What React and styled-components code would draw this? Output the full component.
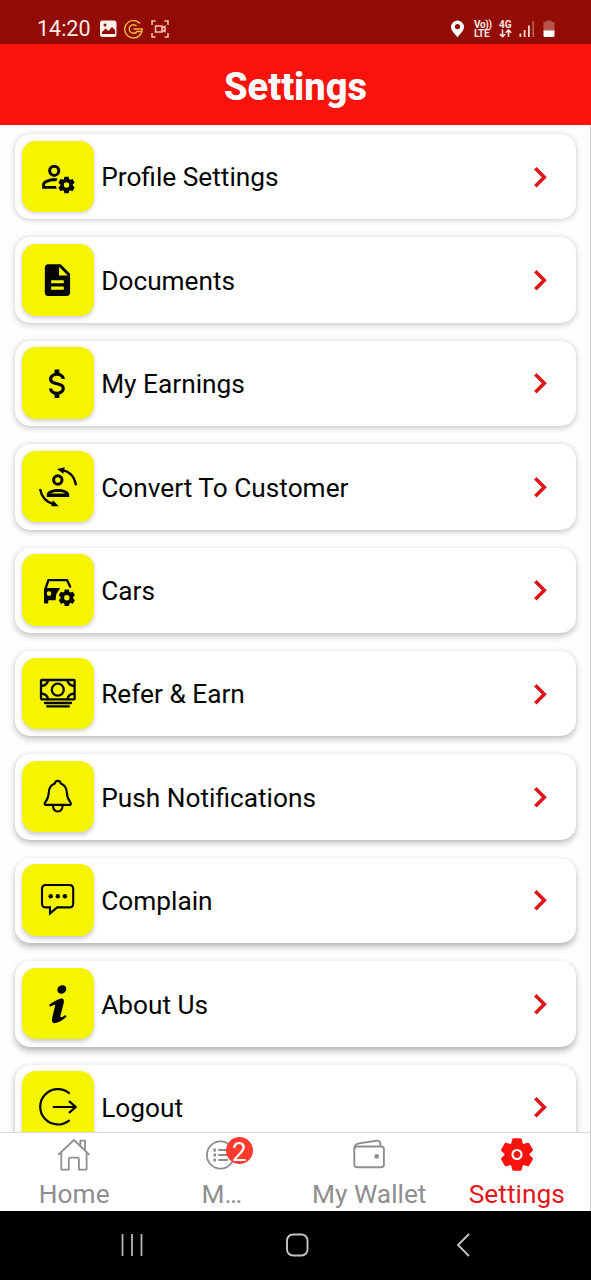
import React from "react";
import styled, { createGlobalStyle } from "styled-components";

const colors = {
  statusBar: "#920b05",
  red: "#f9130c",
  chevron: "#e0151a",
  yellow: "#f6f500",
  grey: "#8e8e8f",
  badge: "#ff3b30",
  ink: "#050505",
};

const GlobalStyle = createGlobalStyle`
  * {
    box-sizing: border-box;
  }
  body {
    margin: 0;
    background: #fff;
    font-family: Roboto, "Liberation Sans", sans-serif;
  }
`;

const Screen = styled.div`
  display: flex;
  flex-direction: column;
  width: 591px;
  height: 1280px;
  overflow: hidden;
  background: #fefefe;
`;

const StatusBar = styled.div`
  display: flex;
  flex: none;
  justify-content: space-between;
  height: 44px;
  padding: 15px 36px 0 37px;
  background: ${colors.statusBar};
  color: #ffe9e2;
`;

const StatusGroup = styled.div`
  display: flex;
  align-items: center;
  height: 28px;
  gap: ${props => props.$gap}px;
`;

const Clock = styled.span`
  width: 55px;
  font-size: 21.5px;
  line-height: 28px;
`;

const Network = styled.span`
  display: flex;
  flex-direction: column;
  width: ${props => props.$width}px;
  font-size: 10px;
  font-weight: 700;
  line-height: 9.5px;
  letter-spacing: ${props => props.$tracking || 0}px;
  white-space: nowrap;
`;

const Header = styled.header`
  display: flex;
  flex: none;
  align-items: center;
  justify-content: center;
  height: 81px;
  padding-top: 5px;
  background: ${colors.red};
`;

const Title = styled.h1`
  margin: 0;
  color: #fff;
  font-size: 38px;
  font-weight: 800;
  line-height: 44px;
`;

const List = styled.main`
  display: flex;
  flex: 1;
  flex-direction: column;
  gap: 18px;
  min-height: 0;
  padding: 9px 14px 0 15px;
  overflow: hidden;
  border-right: 1px solid #c9c9c9;
`;

const Card = styled.div`
  display: flex;
  flex: none;
  align-items: center;
  height: 85.4px;
  padding: 0 19px 0 7px;
  border-radius: 15px;
  background: #fff;
  box-shadow: 0 ${props => 1 + props.$depth * 0.3}px 6px rgba(0, 0, 0, ${props => 0.2 + props.$depth * 0.01}),
    0 0 1px rgba(0, 0, 0, 0.1);
`;

const IconTile = styled.div`
  flex: none;
  width: 71.5px;
  height: 71.5px;
  margin-top: -0.6px;
  border-radius: 14px;
  background: ${colors.yellow};
  box-shadow: 0 ${props => 1 + props.$depth * 0.2}px 4px rgba(0, 0, 0, 0.2);
  svg {
    display: block;
  }
`;

const Label = styled.span`
  flex: 1;
  padding: 1.4px 0 0 7.7px;
  color: #050505;
  font-size: 26.25px;
  line-height: 32px;
`;

const TabBar = styled.nav`
  display: flex;
  flex: none;
  height: 79px;
  border-top: 1px solid #dedede;
  border-right: 1px solid #c9c9c9;
  background: #fff;
`;

const Tab = styled.div`
  display: flex;
  flex: 1;
  flex-direction: column;
  align-items: center;
  padding: 5px 0 0 1px;
  color: ${props => (props.$active ? colors.red : colors.grey)};
`;

const TabIcon = styled.div`
  position: relative;
  width: 34px;
  height: 34px;
  svg {
    display: block;
  }
`;

const TabLabel = styled.span`
  margin-top: 7px;
  color: ${props => (props.$active ? "#e4181c" : "inherit")};
  font-size: 26.3px;
  line-height: 30px;
`;

const Badge = styled.span`
  position: absolute;
  top: -1px;
  left: 21px;
  width: 27px;
  height: 27px;
  border-radius: 50%;
  background: ${colors.badge};
  color: #fff;
  font-size: 26px;
  line-height: 31px;
  text-align: center;
`;

const SystemNav = styled.div`
  display: flex;
  flex: none;
  align-items: center;
  justify-content: space-between;
  height: 69px;
  padding: 0 111px 2px 118.5px;
  background: #000;
`;

const COG =
  "M17 12C16.84 12 16.76 12.08 16.76 12.24L16.5 13.5C16.28 13.68 15.96 13.84 15.72 14L14.44 13.5C14.36 13.5 14.2 13.5 14.12 13.6L12.84 15.76C12.76 15.84 12.76 16 12.92 16.08L14 17V18L12.92 18.92C12.84 19 12.76 19.16 12.84 19.24L14.12 21.4C14.2 21.5 14.36 21.5 14.44 21.5L15.72 21C15.96 21.16 16.28 21.32 16.5 21.5L16.76 22.76C16.76 22.92 16.84 23 17 23H19.44C19.6 23 19.68 22.92 19.68 22.76L19.92 21.5C20.24 21.32 20.5 21.16 20.76 21L22 21.5C22.12 21.5 22.28 21.5 22.36 21.4L23.56 19.24C23.64 19.16 23.56 19 23.48 18.92L22.44 18V17L23.48 16.08C23.56 16 23.64 15.84 23.56 15.76L22.36 13.6C22.28 13.5 22.12 13.5 22 13.5L20.76 14C20.5 13.84 20.24 13.68 19.92 13.5L19.68 12.24C19.68 12.08 19.6 12 19.44 12H17M18.2 15.7A1.8 1.8 0 0 1 18.2 19.3A1.8 1.8 0 0 1 18.2 15.7Z";

const line = {
  fill: "none",
  stroke: colors.ink,
  strokeLinecap: "round",
  strokeLinejoin: "round",
};

const ProfileIcon = () => (
  <g transform="translate(17.2 17.8) scale(1.5)">
    <circle cx="10" cy="8" r="3.05" fill="none" stroke={colors.ink} strokeWidth="2" />
    <path d="M10 13C7.33 13 2 14.33 2 17V20H11.7L11.2 18.1H3.9V17C3.9 16.36 7.03 14.9 10 14.9C10.5 14.9 11 14.95 11.4 15L12.3 13.2C11.5 13.06 10.7 13 10 13Z" />
    <path d={COG} fillRule="evenodd" />
  </g>
);

const DocumentIcon = () => (
  <path
    transform="translate(16.5 17.2) scale(1.58)"
    d="M14 2H6c-1.1 0-1.99.9-1.99 2L4 20c0 1.1.89 2 1.99 2H18c1.1 0 2-.9 2-2V8l-6-6zm2 16H8v-2h8v2zm0-4H8v-2h8v2zm-3-5V3.5L18.5 9H13z"
  />
);

const DollarIcon = () => (
  <path
    transform="translate(16 17.8) scale(1.58)"
    d="M7 15H9C9 16.08 10.37 17 12 17C13.63 17 15 16.08 15 15C15 13.9 13.96 13.5 11.76 12.97C9.64 12.44 7 11.78 7 9C7 7.21 8.47 5.69 10.5 5.18V3H13.5V5.18C15.53 5.69 17 7.21 17 9H15C15 7.92 13.63 7 12 7C10.37 7 9 7.92 9 9C9 10.1 10.04 10.5 12.24 11.03C14.36 11.56 17 12.22 17 15C17 16.79 15.53 18.31 13.5 18.82V21H10.5V18.82C8.47 18.31 7 16.79 7 15Z"
  />
);

const ConvertIcon = () => (
  <g>
    <circle cx="35.8" cy="29" r="4.2" fill="none" stroke={colors.ink} strokeWidth="3" />
    <path
      fillRule="evenodd"
      d="M24.8 46V43C25.8 39.6 31 38 36 38S46.2 39.6 47.2 43V46ZM28.8 42.4H43.2C41.5 41.3 39 40.9 36 40.9S30.5 41.3 28.8 42.4Z"
    />
    <path d="M40 19.2C48 20.5 52.5 26 54 34.2" fill="none" stroke={colors.ink} strokeWidth="2.3" />
    <path d="M35 18L42.8 16.2L41.3 22.8Z" />
    <path d="M18 38C19.5 45.5 24 51.3 32 53.3" fill="none" stroke={colors.ink} strokeWidth="2.3" />
    <path d="M36.8 55.3L30.8 49.3L29.4 55.2Z" />
  </g>
);

const CarIcon = () => (
  <g>
    <path d="M23.2 35.6L26.4 26.1H45L48.2 32.8" {...line} strokeWidth="2.3" />
    <path
      fillRule="evenodd"
      d="M22 35L23 34H38.3L36.2 37L34.2 40.5L33.6 46.3H26.3V48.6Q26.3 49.6 25.3 49.6H23Q22 49.6 22 48.6ZM27 37.3A2.3 2.3 0 0 0 27 41.9A2.3 2.3 0 0 0 27 37.3Z"
    />
    <path transform="translate(17.5 17.5) scale(1.5)" d={COG} fillRule="evenodd" />
  </g>
);

const CashIcon = () => (
  <g {...line} strokeWidth="2.3">
    <rect x="19" y="22" width="33.6" height="19.4" rx="0.8" />
    <circle cx="35.8" cy="31.7" r="6" />
    <path d="M19.5 28C23.5 27.5 25.5 25.5 26 22.5M52 28C48 27.5 46 25.5 45.5 22.5M19.5 35.5C23.5 36 25.5 38 26 41M52 35.5C48 36 46 38 45.5 41" />
    <path d="M23 45H49M25.2 48.4H46.8" />
  </g>
);

const BellIcon = () => (
  <g {...line} strokeWidth="2.1">
    <path d="M32.8 22.6C33 20.7 34.2 19.9 35.8 19.9S38.6 20.7 38.8 22.6C42.7 24 44.6 27 44.8 31.5C45 36.5 45.8 38.2 48.3 41.2C49.4 42.6 49 43.9 47.4 43.9H24.2C22.6 43.9 22.2 42.6 23.3 41.2C25.8 38.2 26.6 36.5 26.8 31.5C27 27 28.9 24 32.8 22.6Z" />
    <path d="M30.9 44.5C31.3 48.5 33 50.5 35.8 50.5S40.3 48.5 40.7 44.5" />
  </g>
);

const ChatIcon = () => (
  <g>
    <path
      d="M24 21H47.2Q51.2 21 51.2 25V39.4Q51.2 43.4 47.2 43.4H35.2L28 49.4V43.4H24Q20 43.4 20 39.4V25Q20 21 24 21Z"
      {...line}
      strokeLinejoin="miter"
      strokeWidth="2.1"
    />
    <circle cx="28.7" cy="32.3" r="2.2" />
    <circle cx="35.8" cy="32.3" r="2.2" />
    <circle cx="42.9" cy="32.3" r="2.2" />
  </g>
);

const InfoIcon = () => (
  <path
    transform="translate(16.8 17.2) scale(1.9)"
    d="M12.432 0c1.34 0 2.01.912 2.01 1.957 0 1.305-1.164 2.512-2.679 2.512-1.269 0-2.009-.75-1.974-1.99C9.789 1.436 10.67 0 12.432 0zM8.309 20c-1.058 0-1.833-.652-1.093-3.524l1.214-5.092c.211-.814.246-1.141 0-1.141-.317 0-1.689.562-2.502 1.117l-.528-.88c2.572-2.186 5.531-3.467 6.801-3.467 1.057 0 1.233 1.273.705 3.23l-1.391 5.352c-.246.945-.141 1.271.106 1.271.317 0 1.357-.392 2.379-1.207l.6.814C12.098 19.02 9.365 20 8.309 20z"
  />
);

const LogoutIcon = () => (
  <g {...line} strokeWidth="2.2">
    <path d="M47 22A17.7 17.7 0 1 0 47 49.6" />
    <path d="M31.6 36H53.6M47.6 30.6L53.8 36L47.6 41.4" />
  </g>
);

const Chevron = () => (
  <svg width="34" height="34" viewBox="0 0 34 34">
    <path d="M12.3 8.3L21.3 17.3L12.3 26.3" fill="none" stroke={colors.chevron} strokeWidth="3.6" />
  </svg>
);

const HomeIcon = () => (
  <svg
    width="34"
    height="34"
    viewBox="0 0 34 34"
    fill="none"
    stroke="currentColor"
    strokeWidth="1.8"
    strokeLinejoin="round"
    strokeLinecap="round"
  >
    <path d="M1.8 16.3L16.9 2L32 16.3" />
    <path d="M4.3 14.5V31.6H11.8V21.5Q11.8 19.6 13.7 19.6H20Q21.9 19.6 21.9 21.5V31.6H29.6V14.5" />
    <path d="M23.3 7.5V2.7H28V12" />
  </svg>
);

const ListIcon = () => (
  <svg width="34" height="34" viewBox="0 0 34 34" fill="none" stroke="currentColor" strokeWidth="1.8">
    <circle cx="15.5" cy="17" r="13.6" />
    <path d="M13.3 12H23M13.3 17H23M13.3 22H23" strokeWidth="2" />
    <path d="M8.4 12H11M8.4 17H11M8.4 22H11" strokeWidth="2.8" />
  </svg>
);

const WalletIcon = () => (
  <svg width="34" height="34" viewBox="0 0 34 34" fill="none" stroke="currentColor" strokeWidth="1.9" strokeLinejoin="round">
    <rect x="2.3" y="8.5" width="29.6" height="20.7" rx="2.6" />
    <path d="M2.5 10.5C2.5 7.5 4 5.8 7 5.4L24.5 2.7C27 2.4 28.3 3.6 28.3 6V8.3" />
    <circle cx="24.7" cy="18.4" r="2.3" fill="currentColor" stroke="none" />
  </svg>
);

const teeth = [0, 60, 120, 180, 240, 300];

const GearIcon = () => (
  <svg width="34" height="34" viewBox="-17 -16.5 34 34" fill="currentColor">
    <circle r="12.3" />
    {teeth.map(angle => (
      <path
        key={angle}
        transform={`rotate(${angle})`}
        d="M-6 -10L-4.8 -15Q-4.6 -16.2 -3.4 -16.2H3.4Q4.6 -16.2 4.8 -15L6 -10Z"
      />
    ))}
    <circle r="4.5" fill="none" stroke="#fff" strokeWidth="2.2" />
  </svg>
);

const rows = [
  { label: "Profile Settings", icon: ProfileIcon },
  { label: "Documents", icon: DocumentIcon },
  { label: "My Earnings", icon: DollarIcon },
  { label: "Convert To Customer", icon: ConvertIcon },
  { label: "Cars", icon: CarIcon },
  { label: "Refer & Earn", icon: CashIcon },
  { label: "Push Notifications", icon: BellIcon },
  { label: "Complain", icon: ChatIcon },
  { label: "About Us", icon: InfoIcon },
  { label: "Logout", icon: LogoutIcon },
];

const tabs = [
  { label: "Home", icon: HomeIcon },
  { label: "M…", icon: ListIcon, badge: 2 },
  { label: "My Wallet", icon: WalletIcon },
  { label: "Settings", icon: GearIcon, active: true },
];

function StatusIcons() {
  return (
    <StatusBar>
      <StatusGroup $gap={7.5}>
        <Clock>14:20</Clock>
        <svg width="17" height="18" viewBox="0 0 17 18">
          <rect x="0" y="0.5" width="16.5" height="16.5" rx="2.5" fill="#fff0ec" />
          <circle cx="5" cy="5" r="1.5" fill={colors.statusBar} />
          <path d="M2 14V12L5.5 8.5L8.5 11L12 7L15 10V14Z" fill={colors.statusBar} />
        </svg>
        <svg width="19" height="20" viewBox="0 0 19 20" fill="none" stroke="#f5b942" strokeWidth="1.4">
          <path d="M16 4.5A8.7 8.7 0 1 0 18.2 10H9.5" />
          <path d="M12.6 7A4.3 4.3 0 1 0 13 12.5H17" />
        </svg>
        <svg width="18" height="18" viewBox="0 0 18 18" fill="none" stroke="#f8c4b8" strokeWidth="1.5">
          <path d="M1 5V1H4.500M13.500 1H17V5M17 13V17H13.500M4.500 17H1V13" />
          <path d="M4.5 6H11V12H4.5ZM11 8L14 6.5V11.5L11 10" />
        </svg>
      </StatusGroup>
      <StatusGroup $gap={8}>
        <svg width="16" height="18" viewBox="0 0 16 18">
          <path
            d="M7.5 0.5A6.5 6.5 0 0 0 1 7C1 11 5 13.5 7.5 17.5C10 13.5 14 11 14 7A6.5 6.5 0 0 0 7.5 0.5ZM7.5 4A2.6 2.6 0 0 1 7.5 9.2A2.6 2.6 0 0 1 7.5 4Z"
            fill="#fff"
            fillRule="evenodd"
          />
        </svg>
        <Network $width={17} $tracking={-0.3}>
          <span>Vo))</span>
          <span>LTE</span>
        </Network>
        <Network $width={12}>
          <span>4G</span>
          <svg width="13" height="9" viewBox="0 0 13 9" fill="none" stroke="currentColor" strokeWidth="1.6">
            <path d="M3.5 0.5V7.5M0.8 5L3.5 7.7L6.2 5M9.5 8V1M6.8 3.7L9.5 1L12.2 3.7" />
          </svg>
        </Network>
        <svg width="16" height="18" viewBox="0 0 16 18" fill="#ffd9d0">
          <path d="M0.5 13.5H2.3V17H0.5ZM4.7 10H6.5V17H4.7ZM9 5.5H10.8V17H9Z" />
          <rect x="13.3" y="1" width="1.8" height="16" fill="#bd5b50" />
        </svg>
        <svg width="12" height="18" viewBox="0 0 12 18">
          <path d="M3.5 0.5H8.5V2H11.5V11H0.5V2H3.5Z" fill="#b9544c" />
          <path d="M0.5 10.5H11.5V15.5Q11.5 17 10 17H2Q0.5 17 0.5 15.5Z" fill="#fff" />
        </svg>
      </StatusGroup>
    </StatusBar>
  );
}

export default function App() {
  return (
    <Screen>
      <GlobalStyle />
      <StatusIcons />
      <Header>
        <Title>Settings</Title>
      </Header>
      <List>
        {rows.map(({ label, icon: Icon }, index) => (
          <Card key={label} $depth={index}>
            <IconTile $depth={index}>
              <svg width="71.5" height="71.5" viewBox="0 0 71.5 71.5" fill={colors.ink}>
                <Icon />
              </svg>
            </IconTile>
            <Label>{label}</Label>
            <Chevron />
          </Card>
        ))}
      </List>
      <TabBar>
        {tabs.map(({ label, icon: Icon, badge, active }) => (
          <Tab key={label} $active={active}>
            <TabIcon>
              <Icon />
              {badge && <Badge>{badge}</Badge>}
            </TabIcon>
            <TabLabel $active={active}>{label}</TabLabel>
          </Tab>
        ))}
      </TabBar>
      <SystemNav>
        <svg width="26" height="26" viewBox="0 0 26 26" stroke="#b5b5b5" strokeWidth="1.8">
          <path d="M3.5 2V24M13 2V24M22.5 2V24" />
        </svg>
        <svg width="26" height="26" viewBox="0 0 26 26" fill="none" stroke="#c4c4c4" strokeWidth="1.9">
          <rect x="1" y="2.5" width="20.5" height="21" rx="6" />
        </svg>
        <svg width="26" height="26" viewBox="0 0 26 26" fill="none" stroke="#c4c4c4" strokeWidth="1.9">
          <path d="M15 2L4 13L15 24" />
        </svg>
      </SystemNav>
    </Screen>
  );
}
